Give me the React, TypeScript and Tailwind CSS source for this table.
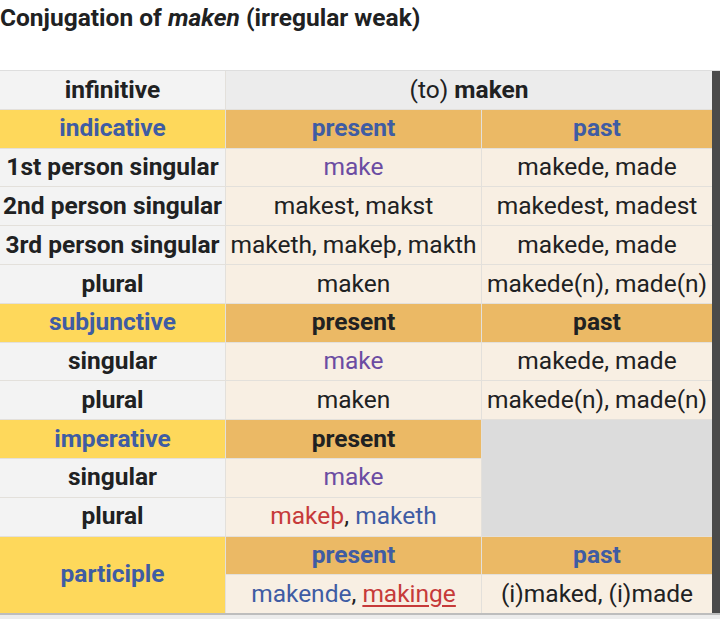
import React from "react";

const F = { fontFamily: "Roboto, 'Noto Sans', Arial, sans-serif" };

function C({ className = "", children }: { className?: string; children?: React.ReactNode }) {
  return <div className={`flex items-center justify-center whitespace-nowrap ${className}`}>{children}</div>;
}

const rh = "bg-[#f3f3f3] font-bold text-[#202122]";
const yel = "bg-[#fed85b] font-bold text-[#3f5ca3]";
const ora = "bg-[#ebb965] font-bold";
const cre = "bg-[#f8efe3] text-[#202122]";

export default function App() {
  return (
    <div style={F} className="w-[720px] h-[619px] bg-white overflow-hidden">
      <div className="h-[71px] border-b border-[#dedede] bg-white">
        <div className="pt-[2px] text-[24.5px] font-bold text-[#202122] leading-[32px]">
          Conjugation of <i>maken</i> (irregular weak)
        </div>
      </div>
      <div className="flex">
        <div className="grid w-[712px] grid-cols-[225px_255px_230px] grid-rows-[repeat(14,37.8px)] gap-px bg-[#e3e0db] text-[24.5px]">
          <C className={`${rh} bg-[#f2f2f2]`}>infinitive</C>
          <C className="col-span-2 bg-[#ececec] text-[#202122]">
            (to)&nbsp;<b>maken</b>
          </C>

          <C className={yel}>indicative</C>
          <C className={`${ora} text-[#3f5ca3]`}>present</C>
          <C className={`${ora} text-[#3f5ca3]`}>past</C>

          <C className={rh}>1st person singular</C>
          <C className={`${cre} !text-[#6b4ca2]`}>make</C>
          <C className={cre}>makede, made</C>

          <C className={rh}>2nd person singular</C>
          <C className={cre}>makest, makst</C>
          <C className={cre}>makedest, madest</C>

          <C className={rh}>3rd person singular</C>
          <C className={cre}>maketh, makeþ, makth</C>
          <C className={cre}>makede, made</C>

          <C className={rh}>plural</C>
          <C className={cre}>maken</C>
          <C className={cre}>makede(n), made(n)</C>

          <C className={yel}>subjunctive</C>
          <C className={`${ora} text-[#202122]`}>present</C>
          <C className={`${ora} text-[#202122]`}>past</C>

          <C className={rh}>singular</C>
          <C className={`${cre} !text-[#6b4ca2]`}>make</C>
          <C className={cre}>makede, made</C>

          <C className={rh}>plural</C>
          <C className={cre}>maken</C>
          <C className={cre}>makede(n), made(n)</C>

          <C className={yel}>imperative</C>
          <C className={`${ora} text-[#202122]`}>present</C>
          <div className="row-span-3 bg-[#dcdcdc]" />

          <C className={rh}>singular</C>
          <C className={`${cre} !text-[#6b4ca2]`}>make</C>

          <C className={rh}>plural</C>
          <C className={cre}>
            <span className="text-[#c63a3a]">makeþ</span>,&nbsp;<span className="text-[#3f5ca3]">maketh</span>
          </C>

          <C className={`${yel} row-span-2`}>participle</C>
          <C className={`${ora} text-[#3f5ca3]`}>present</C>
          <C className={`${ora} text-[#3f5ca3]`}>past</C>

          <C className={cre}>
            <span className="text-[#3f5ca3]">makende</span>,&nbsp;
            <span className="text-[#c63a3a] underline decoration-2 underline-offset-[3px]">makinge</span>
          </C>
          <C className={cre}>(i)maked, (i)made</C>
        </div>
        <div className="w-[8px] h-[542px] bg-[#4a4a4a]" />
      </div>
      <div className="h-[2px] bg-[#bdbdbd]" />
      <div className="h-[4px] bg-[#ececec]" />
    </div>
  );
}
